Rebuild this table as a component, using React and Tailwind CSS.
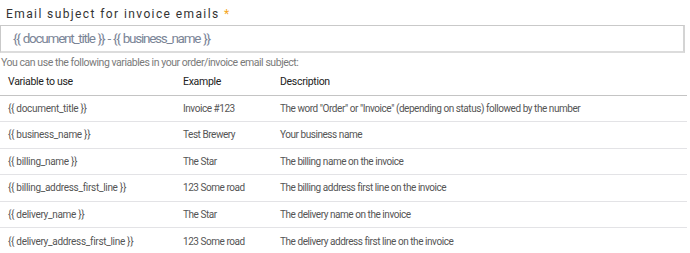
import React from "react";

const rows = [
    ["{{ document_title }}", "Invoice #123", 'The word "Order" or "Invoice" (depending on status) followed by the number'],
    ["{{ business_name }}", "Test Brewery", "Your business name"],
    ["{{ billing_name }}", "The Star", "The billing name on the invoice"],
    ["{{ billing_address_first_line }}", "123 Some road", "The billing address first line on the invoice"],
    ["{{ delivery_name }}", "The Star", "The delivery name on the invoice"],
    ["{{ delivery_address_first_line }}", "123 Some road", "The delivery address first line on the invoice"],
];

export default function App() {
    return (
        <div className="w-[690px] h-[253px] overflow-hidden bg-white font-['Roboto',sans-serif]">
            <label className="block pl-[6px] pt-[6px] text-[12px] leading-[16px] tracking-[1.4px] text-[#333]">
                Email subject for invoice emails <span className="text-[#f5a623]">*</span>
            </label>
            <div className="mt-[3px] w-[685px] h-[28px] border border-[#c9c9c9] border-r-[#d4d4d4] border-r-2 border-b-2 border-b-[#dcdcdc] flex items-center pl-[12px] text-[13.5px] tracking-[-1.25px] [word-spacing:1px] text-[#7b8597]">
                {"{{ document_title }} - {{ business_name }}"}
            </div>
            <p className="mt-[3px] pl-[1px] text-[10.5px] leading-[14px] tracking-[-0.45px] text-[#7a7a7a]">
                You can use the following variables in your order/invoice email subject:
            </p>
            <table className="w-[687px] border-collapse text-[10px] tracking-[-0.45px]">
                <thead>
                    <tr className="h-[25px] border-b border-[#c4c4c4] text-left text-[#222] text-[10.5px] tracking-[-0.3px]">
                        <th className="font-normal pl-[8px] w-[183px]">Variable to use</th>
                        <th className="font-normal w-[97px]">Example</th>
                        <th className="font-normal">Description</th>
                    </tr>
                </thead>
                <tbody className="text-[#555]">
                    {rows.map((row, i) => (
                        <tr key={i} className={`h-[26.5px] ${i < rows.length - 1 ? "border-b border-[#e3e3e6]" : ""}`}>
                            <td className="pl-[8px] tracking-[-0.3px]">{row[0]}</td>
                            <td>{row[1]}</td>
                            <td>{row[2]}</td>
                        </tr>
                    ))}
                </tbody>
            </table>
        </div>
    );
}
